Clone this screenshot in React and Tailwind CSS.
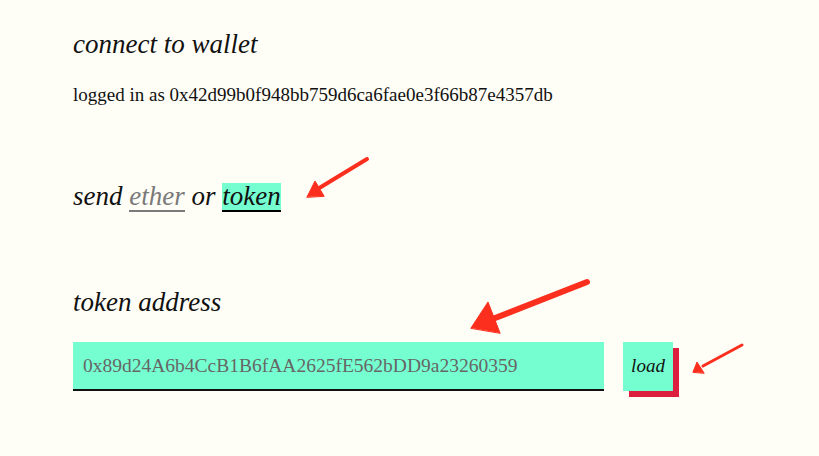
import React from 'react';

// red annotation arrows drawn over the page
function Arrows() {
  return (
    <svg className="absolute inset-0 pointer-events-none" width="819" height="456" viewBox="0 0 819 456">
      <g fill="#fc2f1f" stroke="#fc2f1f" strokeLinecap="round" strokeLinejoin="round">
        <line x1="367" y1="159" x2="316" y2="190" strokeWidth="4" />
        <polygon points="307,197 315,181 324,196" strokeWidth="1" />
        <line x1="587" y1="282" x2="490" y2="320" strokeWidth="6" />
        <polygon points="471,328 488,302 500,333" strokeWidth="1" />
        <line x1="742" y1="345" x2="703" y2="366" strokeWidth="3" />
        <polygon points="693,372 697,362 704,373" strokeWidth="1" />
      </g>
    </svg>
  );
}

export default function App() {
  return (
    <div
      className="relative min-h-[456px] w-full bg-[#fffef6] text-[#111] pl-[73px] pt-[27px]"
      style={{ fontFamily: '"Liberation Serif", "DejaVu Serif", serif' }}
    >
      <h2 className="italic text-[27px] leading-[34px]">connect to wallet</h2>
      <p className="mt-[22px] text-[19px] leading-[24px]">
        logged in as 0x42d99b0f948bb759d6ca6fae0e3f66b87e4357db
      </p>

      <h2 className="mt-[72px] italic text-[27px] leading-[34px]">
        send{' '}
        <span className="inline-block leading-[27px] text-[#7a7a7a] border-b-2 border-[#7a7a7a]">ether</span>{' '}
        or{' '}
        <span className="inline-block leading-[27px] bg-[#75ffd1] border-b-2 border-black">token</span>
      </h2>

      <h2 className="mt-[72px] italic text-[27px] leading-[34px]">token address</h2>

      <div className="mt-[23px] flex items-start gap-[19px]">
        <div className="w-[531px] h-[49px] bg-[#75ffd1] border-b-2 border-[#111] flex items-center px-[10px] text-[19.5px] text-[#666]">
          0x89d24A6b4CcB1B6fAA2625fE562bDD9a23260359
        </div>
        <button className="w-[50px] h-[49px] bg-[#75ffd1] italic text-[19px] shadow-[6px_6px_0_#dc1f3f]">
          load
        </button>
      </div>

      <Arrows />
    </div>
  );
}
